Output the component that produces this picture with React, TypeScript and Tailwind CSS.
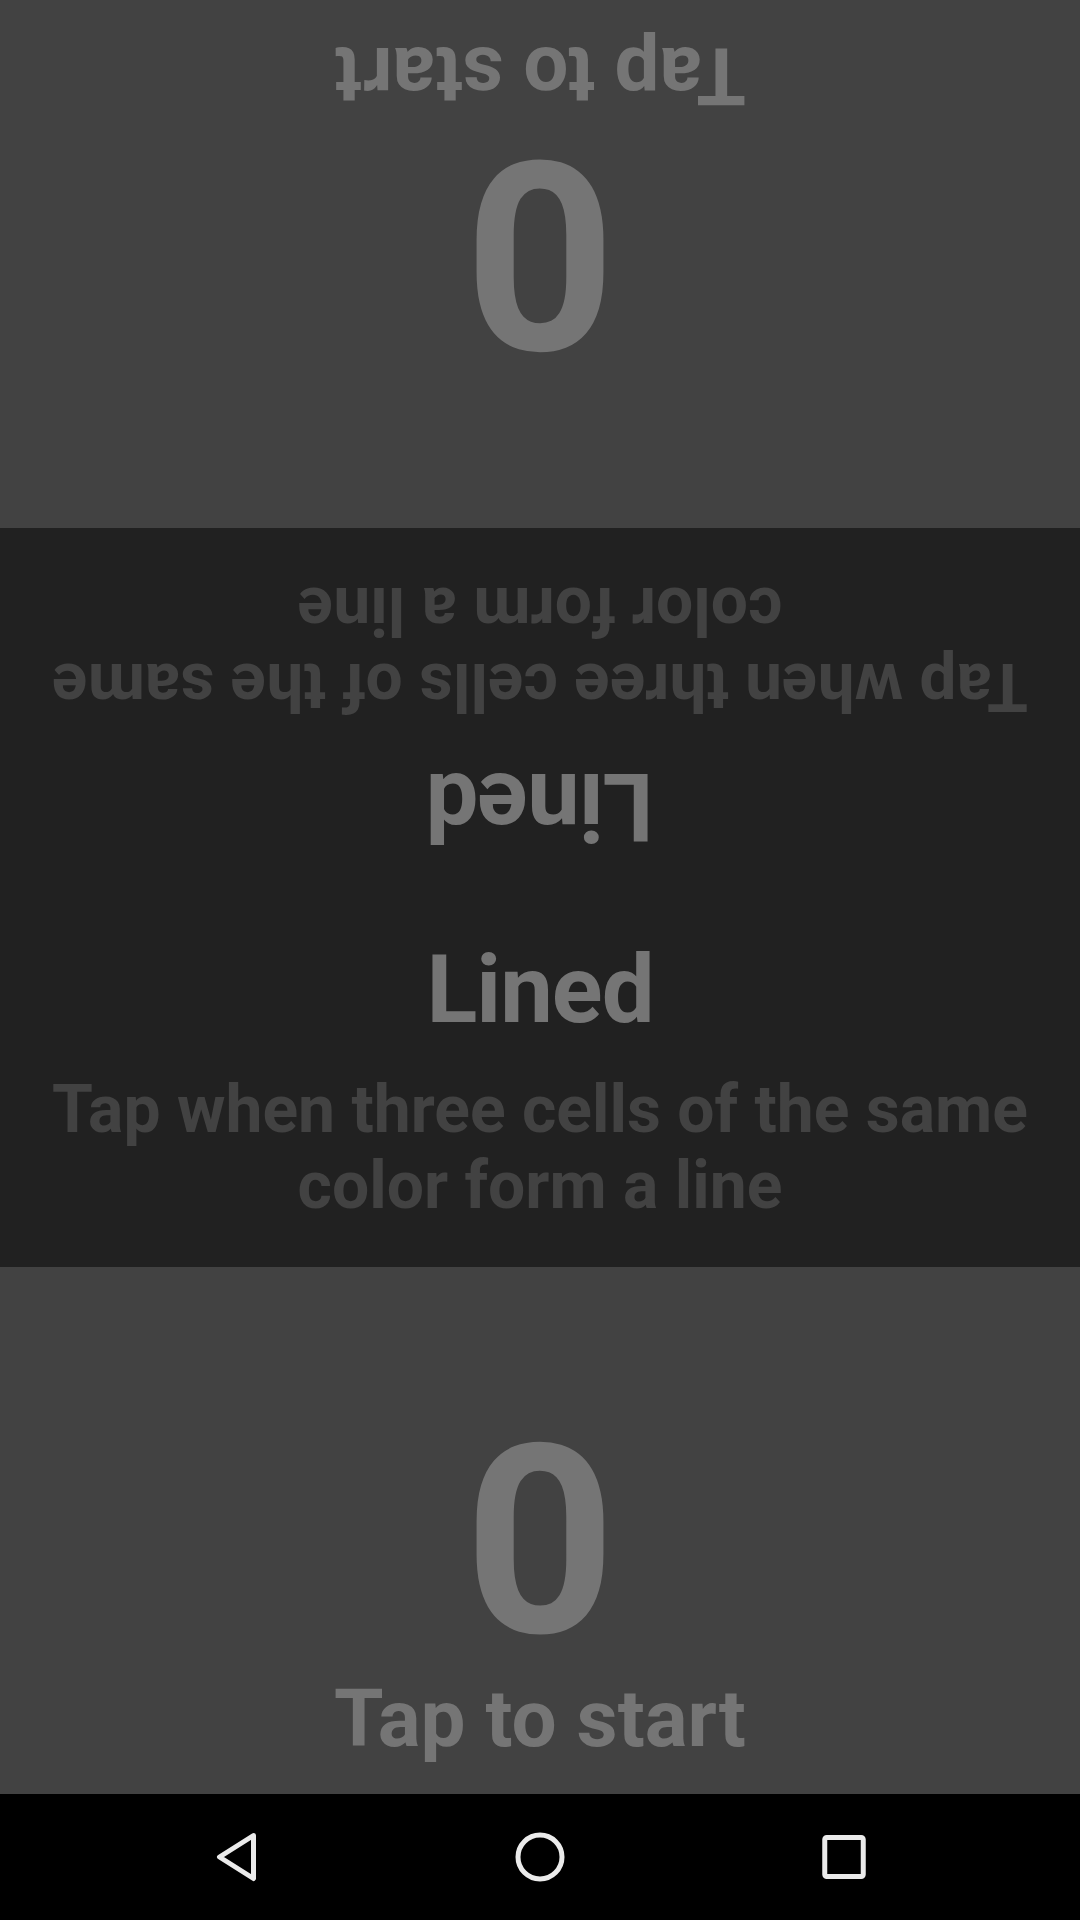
const font = { fontFamily: "Roboto, 'Noto Sans', Arial, sans-serif" };

function PlayerPanel({ flipped }: { flipped?: boolean }) {
  return (
    <div className={`h-[527px] bg-[#424242] ${flipped ? "rotate-180" : ""}`}>
      <div className="h-full flex flex-col items-center justify-end pb-[35px]">
        <div className="text-[264px] leading-none font-bold text-[#757575]">0</div>
        <div className="mt-[5px] text-[80px] leading-none font-bold text-[#757575]">Tap to start</div>
      </div>
    </div>
  );
}

function RulesHalf({ flipped }: { flipped?: boolean }) {
  return (
    <div className={`h-[369.5px] flex flex-col items-center pt-[45px] ${flipped ? "rotate-180" : ""}`}>
      <div className="text-[94px] leading-none font-bold tracking-[-1px] text-[#757575]">Lined</div>
      <div className="mt-[35px] px-[30px] text-center text-[66px] leading-[76px] font-bold text-[#424242]">
        Tap when three cells of the same color form a line
      </div>
    </div>
  );
}

function NavBar() {
  return (
    <div className="h-[126px] bg-black flex items-center justify-center gap-[244px]">
      <svg width="60" height="60" viewBox="0 0 60 60" fill="none" stroke="#ebebeb" strokeWidth="5" strokeLinejoin="round">
        <path d="M47.5 8.5 L13.5 30 L47.5 51.5 Z" />
      </svg>
      <svg width="60" height="60" viewBox="0 0 60 60" fill="none" stroke="#ebebeb" strokeWidth="5">
        <circle cx="30" cy="30" r="22" />
      </svg>
      <svg width="60" height="60" viewBox="0 0 60 60" fill="none" stroke="#ebebeb" strokeWidth="5">
        <rect x="10.75" y="10.5" width="38.5" height="39" rx="2" />
      </svg>
    </div>
  );
}

export default function App() {
  return (
    <div className="w-[1080px] h-[1920px] flex flex-col overflow-hidden" style={font}>
      <div className="h-[528px] bg-[#424242] rotate-180">
        <div className="h-full flex flex-col items-center justify-end pb-[35px]">
          <div className="text-[264px] leading-none font-bold text-[#757575]">0</div>
          <div className="mt-[5px] text-[80px] leading-none font-bold text-[#757575]">Tap to start</div>
        </div>
      </div>
      <div className="h-[739px] bg-[#212121]">
        <RulesHalf flipped />
        <RulesHalf />
      </div>
      <PlayerPanel />
      <NavBar />
    </div>
  );
}
